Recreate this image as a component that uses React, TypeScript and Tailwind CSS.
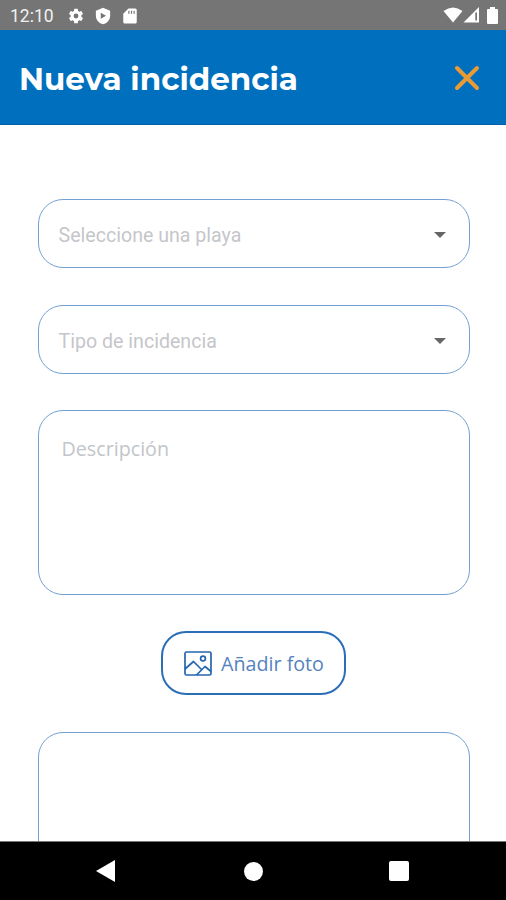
import React from 'react';

function StatusBar() {
  return (
    <div className="flex h-[30px] shrink-0 items-center bg-[#757575] pl-[10px] pr-[6px] text-white">
      <span className="w-[57px] pt-px font-['Roboto',sans-serif] text-[17.5px] leading-[30px] text-[#f1f1f1]">12:10</span>
      <svg className="mt-px h-[18px] w-[18px]" viewBox="0 0 24 24" fill="currentColor">
        <path d="M19.14 12.94c.04-.3.06-.61.06-.94 0-.32-.02-.64-.07-.94l2.03-1.58a.49.49 0 0 0 .12-.61l-1.92-3.32a.49.49 0 0 0-.59-.22l-2.39.96c-.5-.38-1.03-.7-1.62-.94l-.36-2.54a.48.48 0 0 0-.48-.41h-3.84a.47.47 0 0 0-.47.41l-.36 2.54c-.59.24-1.13.57-1.62.94l-2.39-.96a.48.48 0 0 0-.59.22L2.74 8.87a.48.48 0 0 0 .12.61l2.03 1.58a6.6 6.6 0 0 0 0 1.88l-2.03 1.58a.49.49 0 0 0-.12.61l1.92 3.32c.12.22.37.29.59.22l2.39-.96c.5.38 1.03.7 1.62.94l.36 2.54c.05.24.24.41.48.41h3.84c.24 0 .44-.17.47-.41l.36-2.54c.59-.24 1.13-.56 1.62-.94l2.39.96c.22.08.47 0 .59-.22l1.92-3.32a.48.48 0 0 0-.12-.61zM12 15.2a3.2 3.2 0 1 1 0-6.4 3.2 3.2 0 0 1 0 6.4z" />
      </svg>
      <svg className="ml-[9px] mt-px h-[18px] w-[18px]" viewBox="0 0 24 24">
        <path fill="currentColor" d="M12 1 2.500 5v6.500c0 5.500 4 10 9.500 11.500 5.500-1.500 9.500-6 9.500-11.500V5z" />
        <path fill="#757575" d="M9 7.500v8l7-4z" />
      </svg>
      <svg className="ml-[9px] mt-px h-[18px] w-[18px]" viewBox="0 0 24 24">
        <path fill="currentColor" d="M19 2h-9L3 9v11a2 2 0 0 0 2 2h14a2 2 0 0 0 2-2V4a2 2 0 0 0-2-2z" />
        <path stroke="#757575" strokeWidth="1.600" d="M10.500 5v4M14 5v4M17.500 5v4" />
      </svg>
      <svg className="ml-auto h-[16px] w-[20px]" viewBox="0 0 20 16" fill="currentColor">
        <path d="M.5 4Q10-3 19.500 4L10 15.500z" />
      </svg>
      <svg className="h-[16px] w-[17px]" viewBox="0 0 17 16">
        <path fill="currentColor" d="M16 0v15.500H.5z" />
        <path fill="#757575" d="M12.300 5.500h1.700v8h-1.700z" />
      </svg>
      <svg className="ml-[7px] mr-[2px] h-[17px] w-[11px]" viewBox="0 0 11 17" fill="currentColor">
        <path d="M3 0h5v2h2q1 0 1 1v13q0 1-1 1H1q-1 0-1-1V3q0-1 1-1h2z" />
      </svg>
    </div>
  );
}

function SelectField({ label }: { label: string }) {
  return (
    <button className="flex h-[69px] w-full shrink-0 items-center justify-between rounded-[25px] border-[1.5px] border-[#75a0d3] pl-[20px] pr-[23px] pt-[3px]">
      <span className="whitespace-nowrap pt-px text-left font-['Roboto',sans-serif] text-[19.6px] text-[#c5c6ca]">{label}</span>
      <svg className="mb-px h-[6px] w-[12px]" viewBox="0 0 12 6" fill="#666666">
        <path d="M0 0h12L6 6z" />
      </svg>
    </button>
  );
}

export default function App() {
  return (
    <div className="flex h-[900px] w-[506px] flex-col overflow-hidden bg-white">
      <StatusBar />
      <header className="flex h-[95px] shrink-0 items-center justify-between border-b border-[#0060ae] bg-[#0070be] pl-[19px] pr-[26px]">
        <h1 className="whitespace-nowrap pt-[5px] font-['Montserrat','Inter',sans-serif] text-[31px] font-bold leading-none text-white">Nueva incidencia</h1>
        <svg className="mt-px h-[26px] w-[26px]" viewBox="0 0 26 26" fill="none" stroke="#e99a35" strokeWidth="4" strokeLinecap="round">
          <path d="m3 3 20 20M23 3 3 23" />
        </svg>
      </header>
      <main className="flex min-h-0 flex-1 flex-col overflow-hidden pl-[37.5px] pr-[36.5px] pt-[74px]">
        <SelectField label="Seleccione una playa" />
        <div className="h-[37px] shrink-0" />
        <SelectField label="Tipo de incidencia" />
        <div className="mt-[36px] h-[185px] shrink-0 rounded-[25px] border-[1.5px] border-[#75a0d3] px-[23px] pt-[24px] font-['Open_Sans',sans-serif] text-[19.7px] leading-[28px] text-[#c2c5ca]">Descripción</div>
        <button className="ml-[123.5px] mt-[36px] flex h-[64px] w-[185px] shrink-0 items-center rounded-[25px] border-2 border-[#2b6eb8] pl-[21px]">
          <svg className="h-[25px] w-[28px]" viewBox="0 0 28 25" fill="none" stroke="#2466b0" strokeWidth="1.700" strokeLinejoin="round">
            <rect x="1" y="1" width="26" height="23" rx="1.500" />
            <circle cx="19" cy="7.500" r="2.400" />
            <path d="m1 18 8.500-7.500L18 19M12.500 24l8.500-8.500 6 5" />
          </svg>
          <span className="ml-[9px] whitespace-nowrap pt-[2px] font-['Open_Sans',sans-serif] text-[19.7px] text-[#5583bd]">Añadir foto</span>
        </button>
        <div className="mt-[37px] h-[185px] shrink-0 rounded-[25px] border-[1.5px] border-[#75a0d3]" />
      </main>
      <nav className="flex h-[59px] shrink-0 items-center justify-between border-t border-[#777777] bg-black pl-[96px] pr-[97px]">
        <svg className="h-[22px] w-[19px]" viewBox="0 0 19 22" fill="white"><path d="M19 0v22L0 11z" /></svg>
        <div className="ml-[2px] h-[19px] w-[19px] rounded-full bg-white" />
        <div className="h-[20px] w-[20px] rounded-[2px] bg-white" />
      </nav>
    </div>
  );
}
